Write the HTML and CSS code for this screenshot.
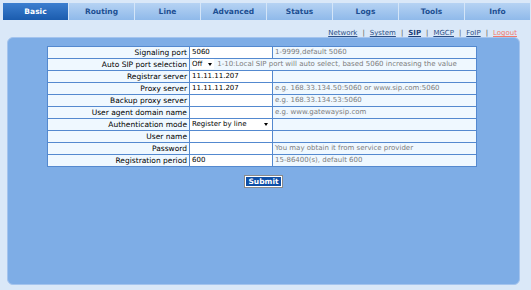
FILE: index.html
```html
<!DOCTYPE html>
<html lang="en">
<head>
  <meta charset="UTF-8" />
  <title>SIP Settings</title>
  <link rel="stylesheet" href="styles.css">
</head>
<body>
  <!-- Main menu -->
  <div class="tabs">
    <div class="tab active">Basic</div>
    <div class="tab">Routing</div>
    <div class="tab">Line</div>
    <div class="tab">Advanced</div>
    <div class="tab">Status</div>
    <div class="tab">Logs</div>
    <div class="tab">Tools</div>
    <div class="tab">Info</div>
  </div>

  <!-- Sub menu -->
  <div class="sublinks">
    <a href="#">Network</a><span class="sep">|</span>
    <a href="#">System</a><span class="sep">|</span>
    <a href="#" class="current">SIP</a><span class="sep">|</span>
    <a href="#">MGCP</a><span class="sep">|</span>
    <a href="#">FoIP</a><span class="sep">|</span>
    <a href="#" class="logout">Logout</a>
  </div>

  <div class="panel">
    <table class="settings">
      <tr>
        <td class="label">Signaling port</td>
        <td class="value">5060</td>
        <td class="hint">1-9999,default 5060</td>
      </tr>
      <tr>
        <td class="label">Auto SIP port selection</td>
        <td class="hint wide" colspan="2"><span class="select small">Off</span> 1-10:Local SIP port will auto select, based 5060 increasing the value</td>
      </tr>
      <tr>
        <td class="label">Registrar server</td>
        <td class="value">11.11.11.207</td>
        <td class="hint"></td>
      </tr>
      <tr>
        <td class="label">Proxy server</td>
        <td class="value">11.11.11.207</td>
        <td class="hint">e.g. 168.33.134.50:5060 or www.sip.com:5060</td>
      </tr>
      <tr>
        <td class="label">Backup proxy server</td>
        <td class="value"></td>
        <td class="hint">e.g. 168.33.134.53:5060</td>
      </tr>
      <tr>
        <td class="label">User agent domain name</td>
        <td class="value"></td>
        <td class="hint">e.g. www.gatewaysip.com</td>
      </tr>
      <tr>
        <td class="label">Authentication mode</td>
        <td class="value"><span class="select full">Register by line</span></td>
        <td class="hint"></td>
      </tr>
      <tr>
        <td class="label">User name</td>
        <td class="value"></td>
        <td class="hint"></td>
      </tr>
      <tr>
        <td class="label">Password</td>
        <td class="value"></td>
        <td class="hint">You may obtain it from service provider</td>
      </tr>
      <tr>
        <td class="label">Registration period</td>
        <td class="value">600</td>
        <td class="hint">15-86400(s), default 600</td>
      </tr>
    </table>

    <div class="actions">
      <button class="submit">Submit</button>
    </div>
  </div>
</body>
</html>
```

FILE: styles.css
```css
body {
  margin: 0;
  background: #dae8f8;
  font-family: 'DejaVu Sans', Verdana, sans-serif;
  font-size: 7px;
  color: #000;
}

.tabs {
  display: flex;
  margin: 3px 1px 0 3px;
  height: 17px;
}

.tab {
  flex: 1;
  text-align: center;
  line-height: 17px;
  font-weight: bold;
  font-size: 7.5px;
  color: #1d4f92;
  background: linear-gradient(to bottom, #b6d3f3, #8fb9ea);
  border-left: 1px solid #d4e5f8;
}

.tab.active {
  color: #fff;
  background: linear-gradient(to bottom, #3c7fd0, #1b5cae);
  border-left: none;
}

.sublinks {
  display: flex;
  justify-content: flex-end;
  padding: 9px 14px 0 0;
  height: 8px;
  line-height: 8px;
  font-size: 7px;
}

.sublinks a {
  color: #2b4f86;
}

.sublinks a.current {
  font-weight: bold;
  color: #1c3f78;
}

.sublinks a.logout {
  color: #f07a6e;
}

.sep {
  color: #555;
  margin: 0 5px;
}

.panel {
  margin: 0 11px 0 7px;
  height: 248px;
  background: #7eade6;
  border: 1px solid #a4c4ee;
  border-radius: 6px;
  box-sizing: border-box;
  padding-top: 8px;
}

.settings {
  margin-left: 39px;
  width: 430px;
  border-collapse: separate;
  border-spacing: 1px;
  background: #5489cf;
}

.settings td {
  height: 11px;
  padding: 0 2px;
  line-height: 11px;
  white-space: nowrap;
}

.label {
  width: 137px;
  text-align: right;
  font-size: 7.5px;
  background: #eff8ff;
}

.value {
  width: 77px;
  background: #fff;
}

.hint {
  background: #eff8ff;
  color: #7c7c7c;
}

.select {
  display: inline-block;
  position: relative;
  background: #fff;
  color: #000;
  height: 10px;
  line-height: 10px;
  vertical-align: top;
}

.select::after {
  content: "";
  position: absolute;
  right: 2px;
  top: 4px;
  border-left: 2.5px solid transparent;
  border-right: 2.5px solid transparent;
  border-top: 3px solid #000;
}

.select.small {
  width: 22px;
  margin-right: 1px;
}

.select.full {
  width: 78px;
}

.actions {
  text-align: center;
  margin-top: 9px;
}

.submit {
  font-family: 'DejaVu Sans', Verdana, sans-serif;
  font-size: 7.5px;
  font-weight: bold;
  color: #fff;
  background: #0f4fa6;
  border: 1px solid #fff;
  outline: 1px solid #8a8a8a;
  padding: 0 2px;
  height: 11px;
  line-height: 9px;
}
```
